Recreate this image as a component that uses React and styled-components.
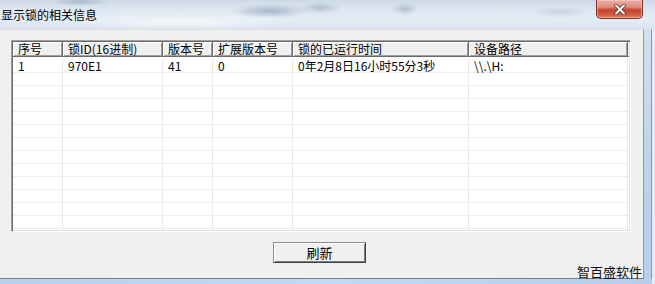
import React from 'react';
import styled, { createGlobalStyle } from 'styled-components';

const Global = createGlobalStyle`
  html, body { margin: 0; padding: 0; }
  body {
    width: 655px;
    height: 284px;
    overflow: hidden;
    background: #e6edf5;
    font-family: "Noto Sans CJK SC", "Liberation Sans", sans-serif;
    color: #000;
  }
`;

const Window = styled.div`
  position: relative;
  width: 655px;
  height: 284px;
  display: flex;
  flex-direction: column;
`;

const TitleBar = styled.div`
  height: 29px;
  flex: none;
  display: flex;
  align-items: center;
  padding: 0 12px 0 1px;
  box-sizing: border-box;
  background:
    radial-gradient(ellipse 40px 7px at 270px 11px, rgba(120, 140, 165, 0.55), transparent),
    radial-gradient(ellipse 22px 6px at 320px 8px, rgba(130, 150, 175, 0.45), transparent),
    radial-gradient(ellipse 14px 6px at 405px 9px, rgba(120, 140, 165, 0.45), transparent),
    radial-gradient(ellipse 30px 4px at 80px 2px, rgba(120, 140, 165, 0.45), transparent),
    radial-gradient(ellipse 30px 5px at 560px 12px, rgba(150, 170, 195, 0.35), transparent),
    radial-gradient(ellipse 120px 10px at 180px 22px, rgba(255, 255, 255, 0.6), transparent),
    linear-gradient(180deg, #cdd9e6 0%, #dfe8f2 35%, #e3ebf4 70%, #d9e3ee 100%);
`;

const Title = styled.span`
  font-size: 12px;
  line-height: 14px;
`;

const CloseButton = styled.div`
  margin-left: auto;
  align-self: flex-start;
  width: 47px;
  height: 19px;
  box-sizing: border-box;
  border: 1px solid #7a3128;
  border-top: none;
  border-radius: 0 0 5px 5px;
  display: flex;
  align-items: center;
  justify-content: center;
  background: linear-gradient(
    180deg,
    #e8b0a6 0%,
    #dc8c7e 40%,
    #c4432e 55%,
    #cf5a41 80%,
    #dd8366 100%
  );
  box-shadow: inset 0 0 0 1px rgba(255, 220, 210, 0.45);
`;

const Body = styled.div`
  flex: 1;
  display: flex;
  min-height: 0;
`;

const ClientArea = styled.div`
  width: 644px;
  flex: none;
  box-sizing: border-box;
  background: #f0f0f0;
  border-top: 1px solid #d6dde5;
  border-right: 1px solid #8a99ab;
  border-bottom: 1px solid #6f8196;
  padding: 10px 0 0 11px;
  display: flex;
  flex-direction: column;
`;

const RightFrame = styled.div`
  width: 7px;
  flex: none;
  margin-right: 3px;
  border-right: 1px solid #8497ad;
  background: linear-gradient(180deg, #d3e1ef 0%, #bfd4ea 50%, #b7cfe9 100%);
`;

const BottomFrame = styled.div`
  height: 5px;
  flex: none;
  margin-right: 3px;
  background: linear-gradient(90deg, #b8d0ea 0%, #c4d9ef 50%, #b6cee9 100%);
`;

const ListView = styled.div`
  width: 620px;
  height: 192px;
  box-sizing: border-box;
  border: 1px solid;
  border-color: #a0a0a0 #ffffff #ffffff #a0a0a0;
  box-shadow: inset 1px 1px 0 #696969, inset -1px -1px 0 #e3e3e3;
  padding: 1px;
  background: #fff;
  display: flex;
  flex-direction: column;
  overflow: hidden;
`;

const HeaderRow = styled.div`
  display: flex;
  height: 15px;
  flex: none;
  background: #f0f0f0;
`;

const HeaderCell = styled.div`
  width: ${(p) => p.$w}px;
  flex: none;
  box-sizing: border-box;
  border-right: 1px solid #696969;
  border-bottom: 1px solid #696969;
  box-shadow: inset 1px 1px 0 #ffffff, inset -1px -1px 0 #a0a0a0;
  padding-left: 5px;
  font-size: 12px;
  line-height: 14px;
  display: flex;
  align-items: center;
  white-space: nowrap;
`;

const HeaderFiller = styled.div`
  flex: 1;
  border-bottom: 1px solid #696969;
  background: #f0f0f0;
`;

const Rows = styled.div`
  flex: 1;
  overflow: hidden;
`;

const Row = styled.div`
  display: flex;
  height: ${(p) => (p.$first ? 16 : 13)}px;
  box-sizing: border-box;
  padding-top: ${(p) => (p.$first ? 2 : 0)}px;
  border-bottom: 1px solid #ededed;
`;

const Cell = styled.div`
  width: ${(p) => p.$w}px;
  flex: none;
  box-sizing: border-box;
  border-right: 1px solid #e8e8e8;
  padding-left: 5px;
  font-size: 12px;
  line-height: 13px;
  white-space: nowrap;
`;

const ButtonRow = styled.div`
  display: flex;
  justify-content: center;
  width: 620px;
  margin-top: 10px;
  padding-right: 3px;
  box-sizing: border-box;
`;

const PushButton = styled.button`
  width: 93px;
  height: 21px;
  box-sizing: border-box;
  border: 1px solid;
  border-color: #8c8c8c #404040 #404040 #8c8c8c;
  box-shadow: inset 1px 1px 0 #ffffff, inset -1px -1px 0 #7a7a7a;
  background: #f0f0f0;
  font-family: "Noto Sans CJK SC", sans-serif;
  font-size: 13px;
  line-height: 15px;
  color: #000;
  padding: 0;
  cursor: default;
`;

const Watermark = styled.div`
  position: absolute;
  left: 577px;
  top: 263px;
  font-family: "Noto Sans CJK SC", sans-serif;
  font-size: 13px;
  line-height: 17px;
  color: #111;
  white-space: nowrap;
`;

const columns = [
  { title: '序号', w: 50 },
  { title: '锁ID(16进制)', w: 100 },
  { title: '版本号', w: 50 },
  { title: '扩展版本号', w: 80 },
  { title: '锁的已运行时间', w: 176 },
  { title: '设备路径', w: 159 },
];

const data = [['1', '970E1', '41', '0', '0年2月8日16小时55分3秒', '\\\\.\\H:']];

const CloseIcon = () => (
  <svg width="12" height="11" viewBox="0 0 12 11">
    <path d="M2 1.5 L10 9.5 M10 1.5 L2 9.5" stroke="#5a2a22" strokeWidth="3.6" strokeLinecap="round" />
    <path d="M2 1.5 L10 9.5 M10 1.5 L2 9.5" stroke="#ffffff" strokeWidth="2" strokeLinecap="round" />
  </svg>
);

export default function App() {
  const rows = [...data];
  while (rows.length < 14) rows.push(null);
  return (
    <>
      <Global />
      <Window>
        <TitleBar>
          <Title>显示锁的相关信息</Title>
          <CloseButton>
            <CloseIcon />
          </CloseButton>
        </TitleBar>
        <Body>
          <ClientArea>
            <ListView>
              <HeaderRow>
                {columns.map((c) => (
                  <HeaderCell key={c.title} $w={c.w}>
                    {c.title}
                  </HeaderCell>
                ))}
                <HeaderFiller />
              </HeaderRow>
              <Rows>
                {rows.map((r, i) => (
                  <Row key={i} $first={i === 0}>
                    {columns.map((c, j) => (
                      <Cell key={j} $w={c.w}>
                        {r ? r[j] : ''}
                      </Cell>
                    ))}
                  </Row>
                ))}
              </Rows>
            </ListView>
            <ButtonRow>
              <PushButton>刷新</PushButton>
            </ButtonRow>
          </ClientArea>
          <RightFrame />
        </Body>
        <BottomFrame />
        <Watermark>智百盛软件</Watermark>
      </Window>
    </>
  );
}
